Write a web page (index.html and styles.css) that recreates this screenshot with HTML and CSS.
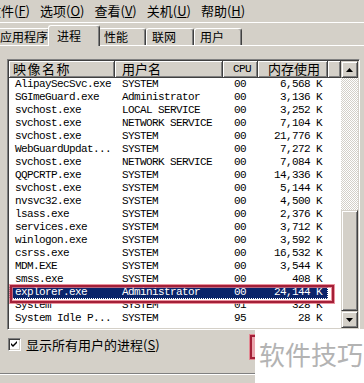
FILE: index.html
```html
<!DOCTYPE html>
<html lang="zh-CN">
<head>
  <meta charset="UTF-8" />
  <title>Windows 任务管理器</title>
  <link rel="stylesheet" href="styles.css">
</head>
<body>
  <div class="window">
    <div class="menubar">
      <span class="menu">文件(<u>F</u>)</span>
      <span class="menu">选项(<u>O</u>)</span>
      <span class="menu">查看(<u>V</u>)</span>
      <span class="menu">关机(<u>U</u>)</span>
      <span class="menu">帮助(<u>H</u>)</span>
    </div>

    <div class="tabs">
      <div class="tab first">应用程序</div>
      <div class="tab active">进程</div>
      <div class="tab">性能</div>
      <div class="tab">联网</div>
      <div class="tab">用户</div>
    </div>

    <div class="panel">
      <div class="listview">
        <div class="list-main">
          <div class="list-head">
            <div class="hcell c-name">映像名称</div>
            <div class="hcell c-user">用户名</div>
            <div class="hcell c-cpu">CPU</div>
            <div class="hcell c-mem">内存使用</div>
            <div class="hcell"></div>
          </div>
          <div class="row"><span class="c-name">AlipaySecSvc.exe</span><span class="c-user">SYSTEM</span><span class="c-cpu">00</span><span class="c-mem">6,568 K</span></div>
          <div class="row"><span class="c-name">SGImeGuard.exe</span><span class="c-user">Administrator</span><span class="c-cpu">00</span><span class="c-mem">3,136 K</span></div>
          <div class="row"><span class="c-name">svchost.exe</span><span class="c-user">LOCAL SERVICE</span><span class="c-cpu">00</span><span class="c-mem">3,252 K</span></div>
          <div class="row"><span class="c-name">svchost.exe</span><span class="c-user">NETWORK SERVICE</span><span class="c-cpu">00</span><span class="c-mem">7,104 K</span></div>
          <div class="row"><span class="c-name">svchost.exe</span><span class="c-user">SYSTEM</span><span class="c-cpu">00</span><span class="c-mem">21,776 K</span></div>
          <div class="row"><span class="c-name">WebGuardUpdat...</span><span class="c-user">SYSTEM</span><span class="c-cpu">00</span><span class="c-mem">7,272 K</span></div>
          <div class="row"><span class="c-name">svchost.exe</span><span class="c-user">NETWORK SERVICE</span><span class="c-cpu">00</span><span class="c-mem">7,084 K</span></div>
          <div class="row"><span class="c-name">QQPCRTP.exe</span><span class="c-user">SYSTEM</span><span class="c-cpu">00</span><span class="c-mem">14,336 K</span></div>
          <div class="row"><span class="c-name">svchost.exe</span><span class="c-user">SYSTEM</span><span class="c-cpu">00</span><span class="c-mem">5,144 K</span></div>
          <div class="row"><span class="c-name">nvsvc32.exe</span><span class="c-user">SYSTEM</span><span class="c-cpu">00</span><span class="c-mem">4,500 K</span></div>
          <div class="row"><span class="c-name">lsass.exe</span><span class="c-user">SYSTEM</span><span class="c-cpu">00</span><span class="c-mem">2,376 K</span></div>
          <div class="row"><span class="c-name">services.exe</span><span class="c-user">SYSTEM</span><span class="c-cpu">00</span><span class="c-mem">3,712 K</span></div>
          <div class="row"><span class="c-name">winlogon.exe</span><span class="c-user">SYSTEM</span><span class="c-cpu">00</span><span class="c-mem">3,592 K</span></div>
          <div class="row"><span class="c-name">csrss.exe</span><span class="c-user">SYSTEM</span><span class="c-cpu">00</span><span class="c-mem">16,532 K</span></div>
          <div class="row"><span class="c-name">MDM.EXE</span><span class="c-user">SYSTEM</span><span class="c-cpu">00</span><span class="c-mem">3,544 K</span></div>
          <div class="row"><span class="c-name">smss.exe</span><span class="c-user">SYSTEM</span><span class="c-cpu">00</span><span class="c-mem">408 K</span></div>
          <div class="row selected"><span class="c-name">explorer.exe</span><span class="c-user">Administrator</span><span class="c-cpu">00</span><span class="c-mem">24,144 K</span></div>
          <div class="row"><span class="c-name">System</span><span class="c-user">SYSTEM</span><span class="c-cpu">01</span><span class="c-mem">328 K</span></div>
          <div class="row"><span class="c-name">System Idle P...</span><span class="c-user">SYSTEM</span><span class="c-cpu">95</span><span class="c-mem">28 K</span></div>
        </div>
        <div class="scrollbar">
          <div class="sb-btn"><svg width="7" height="4" viewBox="0 0 7 4"><polygon points="3.5,0 7,4 0,4" fill="#000"/></svg></div>
          <div class="sb-track"></div>
          <div class="sb-thumb"></div>
          <div class="sb-btn"><svg width="7" height="4" viewBox="0 0 7 4"><polygon points="0,0 7,0 3.5,4" fill="#000"/></svg></div>
        </div>
      </div>

      <div class="showall">
        <span class="checkbox"><svg width="7" height="7" viewBox="0 0 7 7"><polygon points="0,2 2,4 6,0 6,2 2,6 0,4" fill="#000"/></svg></span>
        <span>显示所有用户的进程(<u>S</u>)</span>
      </div>
    </div>

    <div class="statusbar"></div>

    <div class="mark-row"></div>
    <div class="mark-btn"></div>
    <div class="watermark">软件技巧</div>
  </div>
</body>
</html>
```

FILE: styles.css
```css
body {
  margin: 0;
}

.window {
  position: relative;
  width: 364px;
  height: 383px;
  overflow: hidden;
  background: #d4d0c8;
  color: #000;
  font-family: "Noto Sans CJK SC", sans-serif;
}

/* menu */
.menubar {
  display: flex;
  gap: 10px;
  height: 22px;
  margin-left: -12px;
  border-bottom: 1px solid #fff;
  font-size: 13px;
  line-height: 22px;
  white-space: nowrap;
}

/* tabs */
.tabs {
  display: flex;
  align-items: flex-end;
  height: 20px;
  margin-top: 2px;
  border-bottom: 1px solid #fff;
  font-size: 12px;
  white-space: nowrap;
}

.tab {
  box-sizing: border-box;
  width: 48px;
  height: 17px;
  padding-left: 5px;
  line-height: 16px;
  border: 1px solid #fff;
  border-bottom: 0;
  border-right-color: #404040;
  border-radius: 3px 3px 0 0;
  box-shadow: inset -1px 0 #808080;
}

.tab.first {
  width: 56px;
  margin-left: -6px;
}

.tab.active {
  position: relative;
  z-index: 1;
  width: 52px;
  height: 21px;
  margin: 0 -2px -1px;
  padding-left: 8px;
  line-height: 19px;
  background: #d4d0c8;
}

/* process list */
.panel {
  padding: 13px 0 0 7px;
}

.listview {
  display: flex;
  box-sizing: border-box;
  width: 353px;
  padding: 1px;
  background: #fff;
  border: 1px solid;
  border-color: #808080 #fff #fff #808080;
  box-shadow: inset 1px 1px #404040, inset -1px -1px #d4d0c8;
}

.list-main {
  width: 332px;
  height: 267px;
}

.list-head {
  display: grid;
  grid-template-columns: 106px 108px 35px 70px 13px;
  height: 17px;
}

.hcell {
  box-sizing: border-box;
  height: 17px;
  background: #d4d0c8;
  border-right: 1px solid #404040;
  border-bottom: 1px solid #404040;
  box-shadow: inset 1px 1px #fff, inset -1px -1px #808080;
  font-size: 13px;
  line-height: 16px;
  white-space: nowrap;
}

.hcell.c-name {
  padding-left: 4px;
  letter-spacing: 1.5px;
}

.hcell.c-user {
  padding-left: 7px;
}

.hcell.c-cpu {
  padding-right: 6px;
  text-align: right;
  font-family: "Liberation Mono", monospace;
  font-size: 11px;
  letter-spacing: -0.6px;
}

.hcell.c-mem {
  padding-right: 7px;
  text-align: right;
}

.row {
  display: grid;
  grid-template-columns: 106px 108px 35px 70px;
  width: 319px;
  height: 13px;
  line-height: 13px;
  font-family: "Liberation Mono", monospace;
  font-size: 11px;
  letter-spacing: -0.6px;
  white-space: nowrap;
}

.row .c-name {
  padding-left: 6px;
}

.row .c-user {
  padding-left: 7px;
}

.row .c-cpu {
  padding-left: 11px;
}

.row .c-mem {
  padding-right: 6px;
  text-align: right;
}

.row.selected {
  background: #0a246a;
  color: #fff;
  outline: 1px dotted #fff;
  outline-offset: -1px;
}

/* scrollbar */
.scrollbar {
  display: flex;
  flex-direction: column;
  width: 17px;
}

.sb-btn,
.sb-thumb {
  box-sizing: border-box;
  background: #d4d0c8;
  border: 1px solid;
  border-color: #d4d0c8 #404040 #404040 #d4d0c8;
  box-shadow: inset 1px 1px #fff, inset -1px -1px #808080;
}

.sb-btn {
  display: flex;
  align-items: center;
  justify-content: center;
  height: 17px;
}

.sb-track {
  flex: 1;
  background-color: #fff;
  background-image: repeating-conic-gradient(#d4d0c8 0 25%, #fff 0 50%);
  background-size: 2px 2px;
}

.sb-thumb {
  height: 101px;
}

/* checkbox */
.showall {
  display: flex;
  align-items: center;
  gap: 5px;
  height: 13px;
  margin: 8px 0 0 1px;
  font-size: 13px;
  line-height: 13px;
  white-space: nowrap;
}

.checkbox {
  display: flex;
  align-items: center;
  justify-content: center;
  box-sizing: border-box;
  width: 13px;
  height: 13px;
  background: #fff;
  border: 1px solid;
  border-color: #808080 #fff #fff #808080;
  box-shadow: inset 1px 1px #404040, inset -1px -1px #d4d0c8;
}

.statusbar {
  height: 10px;
  margin-top: 22px;
  border-top: 1px solid #808080;
  box-shadow: inset 0 1px #fff;
}

/* annotations drawn over the screenshot */
.mark-row {
  position: absolute;
  left: 10px;
  top: 285px;
  box-sizing: border-box;
  width: 324px;
  height: 18px;
  border: 2px solid #a32038;
  box-shadow: 0 0 0 1px rgba(230, 120, 135, 0.8), inset 0 0 0 1px rgba(230, 120, 135, 0.8);
}

.mark-btn {
  position: absolute;
  left: 250px;
  top: 335px;
  box-sizing: border-box;
  width: 10px;
  height: 24px;
  background: #eaa6ae;
  border: 2px solid #a32038;
  box-shadow: 0 0 0 1px rgba(230, 120, 135, 0.8);
}

.watermark {
  position: absolute;
  left: 255px;
  top: 329px;
  right: 0;
  bottom: 0;
  padding: 12px 0 0 4px;
  background: #fff;
  color: #b3b3b3;
  font-size: 26px;
  line-height: 26px;
  white-space: nowrap;
}
```
